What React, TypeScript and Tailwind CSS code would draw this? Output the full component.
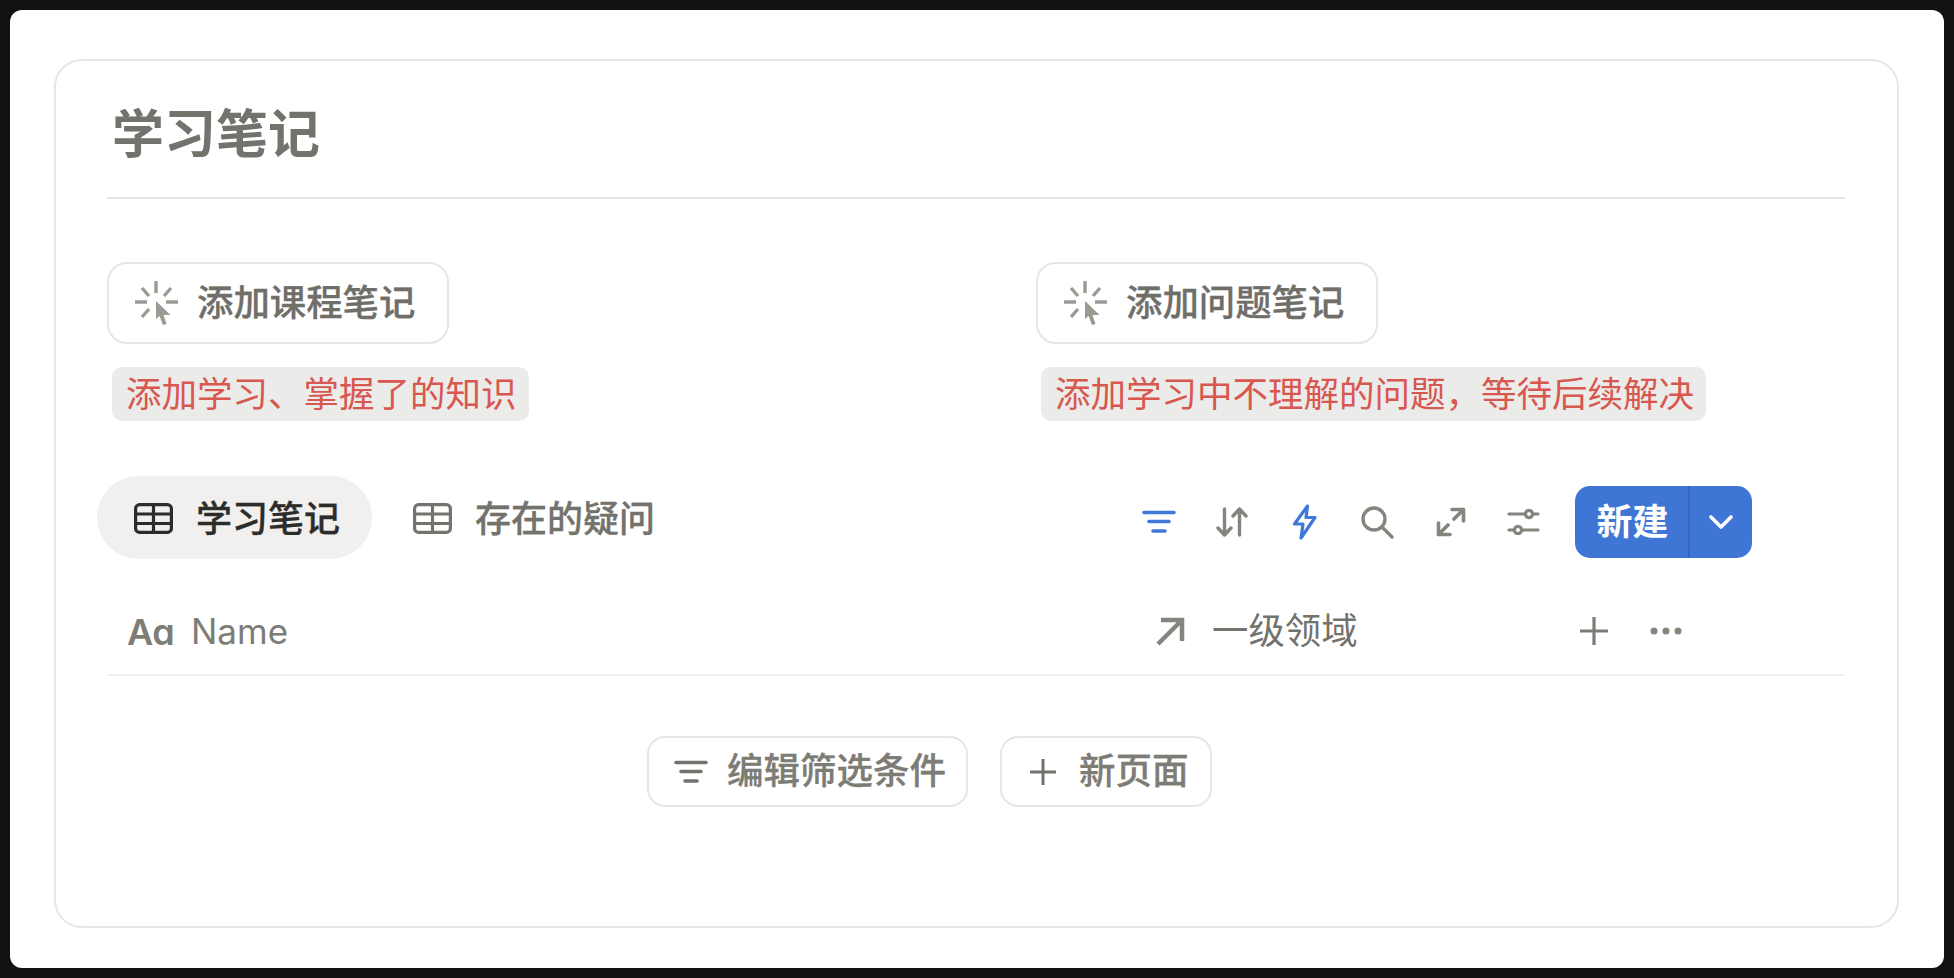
import React from "react";

const font = { fontFamily: '"Inter","Noto Sans CJK SC",sans-serif' };

function ClickIcon() {
  return (
    <svg width="43" height="44" viewBox="0 0 43 44" className="shrink-0">
      <g stroke="#9b9a92" strokeWidth="3.4" fill="none">
        <path d="M21 0v12M0 21h12M31 21h12M7 7l7 8M36 7l-7 8M7 36l7-8" />
      </g>
      <path d="M21 20l14.500 14h-7l3 9-3.500 1-3.500-9-3.500 3z" fill="#9b9a92" />
    </svg>
  );
}

function TableIcon({ color }: { color: string }) {
  return (
    <svg width="39" height="31" viewBox="0 0 39 31" className="shrink-0" fill="none" stroke={color} strokeWidth="3.200">
      <rect x="1.600" y="1.600" width="35.800" height="27.800" rx="4" />
      <path d="M1.600 11h35.800M1.600 20.500h35.800M19.500 1.600v27.800" />
    </svg>
  );
}

function FilterIcon({ color, w = 34 }: { color: string; w?: number }) {
  return (
    <svg width={w} height="26" viewBox="0 0 34 26" fill="none" stroke={color} strokeWidth="3.600" strokeLinecap="round">
      <path d="M2 3.500h30M7 12.500h20M11 22h12" />
    </svg>
  );
}

function ToolCell({ children }: { children: React.ReactNode }) {
  return <div className="flex h-[40px] w-[73px] items-center justify-center">{children}</div>;
}

function ActionBlock({ label, note }: { label: string; note: string }) {
  return (
    <div className="flex flex-col items-start">
      <button className="flex h-[82px] w-[342px] items-center gap-[19px] rounded-[20px] border-2 border-[#e6e6e4] bg-white pl-[26px] text-[36.400px] font-medium text-[#6f6e69] [-webkit-text-stroke:0.3px_#6f6e69]">
        <ClickIcon />
        <span className="leading-none whitespace-nowrap">{label}</span>
      </button>
      <div className="mt-[23px] ml-[5px] flex h-[54px] items-center rounded-[10px] bg-[#ebebea] pl-[14px] pr-[12px] pt-[2px] text-[35.500px] leading-none whitespace-nowrap text-[#d8574f]">
        {note}
      </div>
    </div>
  );
}

export default function App() {
  return (
    <div className="h-[978px] w-[1954px] bg-[#111111] p-[10px]" style={font}>
      <div className="h-full rounded-[12px] bg-white pl-[44px] pr-[45px] pt-[49px]">
        <div className="h-[869px] rounded-[28px] border-2 border-[#e6e6e4] pl-[51px] pr-[52px]">
          <div className="flex h-[138px] items-center border-b-2 border-[#e6e6e4] pl-[5px] pt-[12px] text-[52px] leading-none font-bold text-[#73726c]">
            学习笔记
          </div>

          <div className="mt-[63px] grid grid-cols-[929px_1fr]">
            <ActionBlock label="添加课程笔记" note="添加学习、掌握了的知识" />
            <ActionBlock label="添加问题笔记" note="添加学习中不理解的问题，等待后续解决" />
          </div>

          <div className="mt-[55px] flex items-center">
            <div className="-ml-[10px] flex h-[83px] w-[275px] items-center gap-[23px] rounded-[42px] bg-[#f1f0ee] pl-[37px] pt-[2px] text-[36px] font-medium leading-none text-[#2c2c2b] [-webkit-text-stroke:0.3px_#2c2c2b]">
              <TableIcon color="#2c2c2b" />
              <span>学习笔记</span>
            </div>
            <div className="ml-[41px] flex items-center gap-[23px] pt-[2px] text-[36px] font-medium leading-none text-[#73726c] [-webkit-text-stroke:0.3px_#73726c]">
              <TableIcon color="#73726c" />
              <span>存在的疑问</span>
            </div>
            <div className="ml-auto mr-[93px] mt-[9px] flex items-center">
              <div className="mr-[15px] flex items-center">
                <ToolCell><FilterIcon color="#3f78d8" /></ToolCell>
                <ToolCell>
                  <svg width="32" height="30" viewBox="0 0 32 30" fill="none" stroke="#85847d" strokeWidth="3.400" strokeLinecap="round" strokeLinejoin="round">
                    <path d="M8.500 2v26M2 21l6.500 7 6.500-7M23.500 28V2M17 9l6.500-7 6.500 7" />
                  </svg>
                </ToolCell>
                <ToolCell>
                  <svg width="25" height="36" viewBox="0 0 25 36" fill="none" stroke="#3f78d8" strokeWidth="3.200" strokeLinejoin="round">
                    <path d="M15.500 2L2.500 20h8.500l-2 14 14-20.500h-9z" />
                  </svg>
                </ToolCell>
                <ToolCell>
                  <svg width="33" height="33" viewBox="0 0 33 33" fill="none" stroke="#85847d" strokeWidth="3.400" strokeLinecap="round">
                    <circle cx="13" cy="13" r="11" />
                    <path d="M21 21l10 10" />
                  </svg>
                </ToolCell>
                <ToolCell>
                  <svg width="30" height="30" viewBox="0 0 30 30" fill="none" stroke="#85847d" strokeWidth="3.600" strokeLinecap="round" strokeLinejoin="round">
                    <path d="M16 2.500h11.500V14M27.500 2.500L18 12M14 27.500H2.500V16M2.500 27.500L12 18" />
                  </svg>
                </ToolCell>
                <ToolCell>
                  <svg width="33" height="26" viewBox="0 0 33 26" fill="none" stroke="#85847d" strokeWidth="3.200" strokeLinecap="round">
                    <path d="M2 5h16M26 5h5M2 21h5M15 21h16" />
                    <circle cx="22" cy="5" r="3.600" />
                    <circle cx="11" cy="21" r="3.600" />
                  </svg>
                </ToolCell>
              </div>
              <div className="flex h-[72px] w-[177px] items-center rounded-[15px] bg-[#3f76d6] text-[36px] font-bold leading-none text-white">
                <div className="flex h-full w-[115px] items-center justify-center border-r-2 border-[#3768bf] pl-[2px]">新建</div>
                <div className="flex flex-1 items-center justify-center">
                  <svg width="24" height="14" viewBox="0 0 24 14" fill="none" stroke="white" strokeWidth="3.600" strokeLinecap="round" strokeLinejoin="round">
                    <path d="M2 2l10 10L22 2" />
                  </svg>
                </div>
              </div>
            </div>
          </div>

          <div className="mt-[27px] flex h-[90px] items-center border-b-2 border-[#efefed] pt-[3px] text-[35px] leading-none text-[#7d7c75]">
            <div className="flex w-[1048px] items-center pl-[20px]">
              <span className="w-[64px] text-[36px] font-semibold tracking-[-1px]">Aɑ</span>
              <span>Name</span>
            </div>
            <div className="flex w-[424px] items-center">
              <svg width="30" height="30" viewBox="0 0 30 30" className="mr-[27px] shrink-0" fill="none" stroke="#85847d" strokeWidth="4.500">
                <path d="M6 3h21v21M27 3L3 27" />
              </svg>
              <span className="text-[36.400px] text-[#73726c]">一级领域</span>
            </div>
            <div className="-mt-[2px] flex items-center gap-[41px]">
              <svg width="30" height="30" viewBox="0 0 30 30" fill="none" stroke="#7d7c75" strokeWidth="3.200">
                <path d="M15 1v28M1 15h28" />
              </svg>
              <svg width="32" height="8" viewBox="0 0 32 8" fill="#85847d">
                <circle cx="4" cy="4" r="3.500" />
                <circle cx="16" cy="4" r="3.500" />
                <circle cx="28" cy="4" r="3.500" />
              </svg>
            </div>
          </div>

          <div className="mt-[60px] ml-[540px] flex items-center gap-[32px] text-[36.500px] font-medium leading-none text-[#7d7c75] [-webkit-text-stroke:0.3px_#7d7c75]">
            <button className="flex h-[71px] w-[321px] items-center gap-[19px] rounded-[18px] border-2 border-[#e6e6e4] pl-[25px]">
              <FilterIcon color="#73726c" />
              <span>编辑筛选条件</span>
            </button>
            <button className="flex h-[71px] w-[212px] items-center gap-[22px] rounded-[18px] border-2 border-[#e6e6e4] pl-[27px]">
              <svg width="28" height="28" viewBox="0 0 28 28" fill="none" stroke="#73726c" strokeWidth="3">
                <path d="M14 1v26M1 14h26" />
              </svg>
              <span>新页面</span>
            </button>
          </div>
        </div>
      </div>
    </div>
  );
}
